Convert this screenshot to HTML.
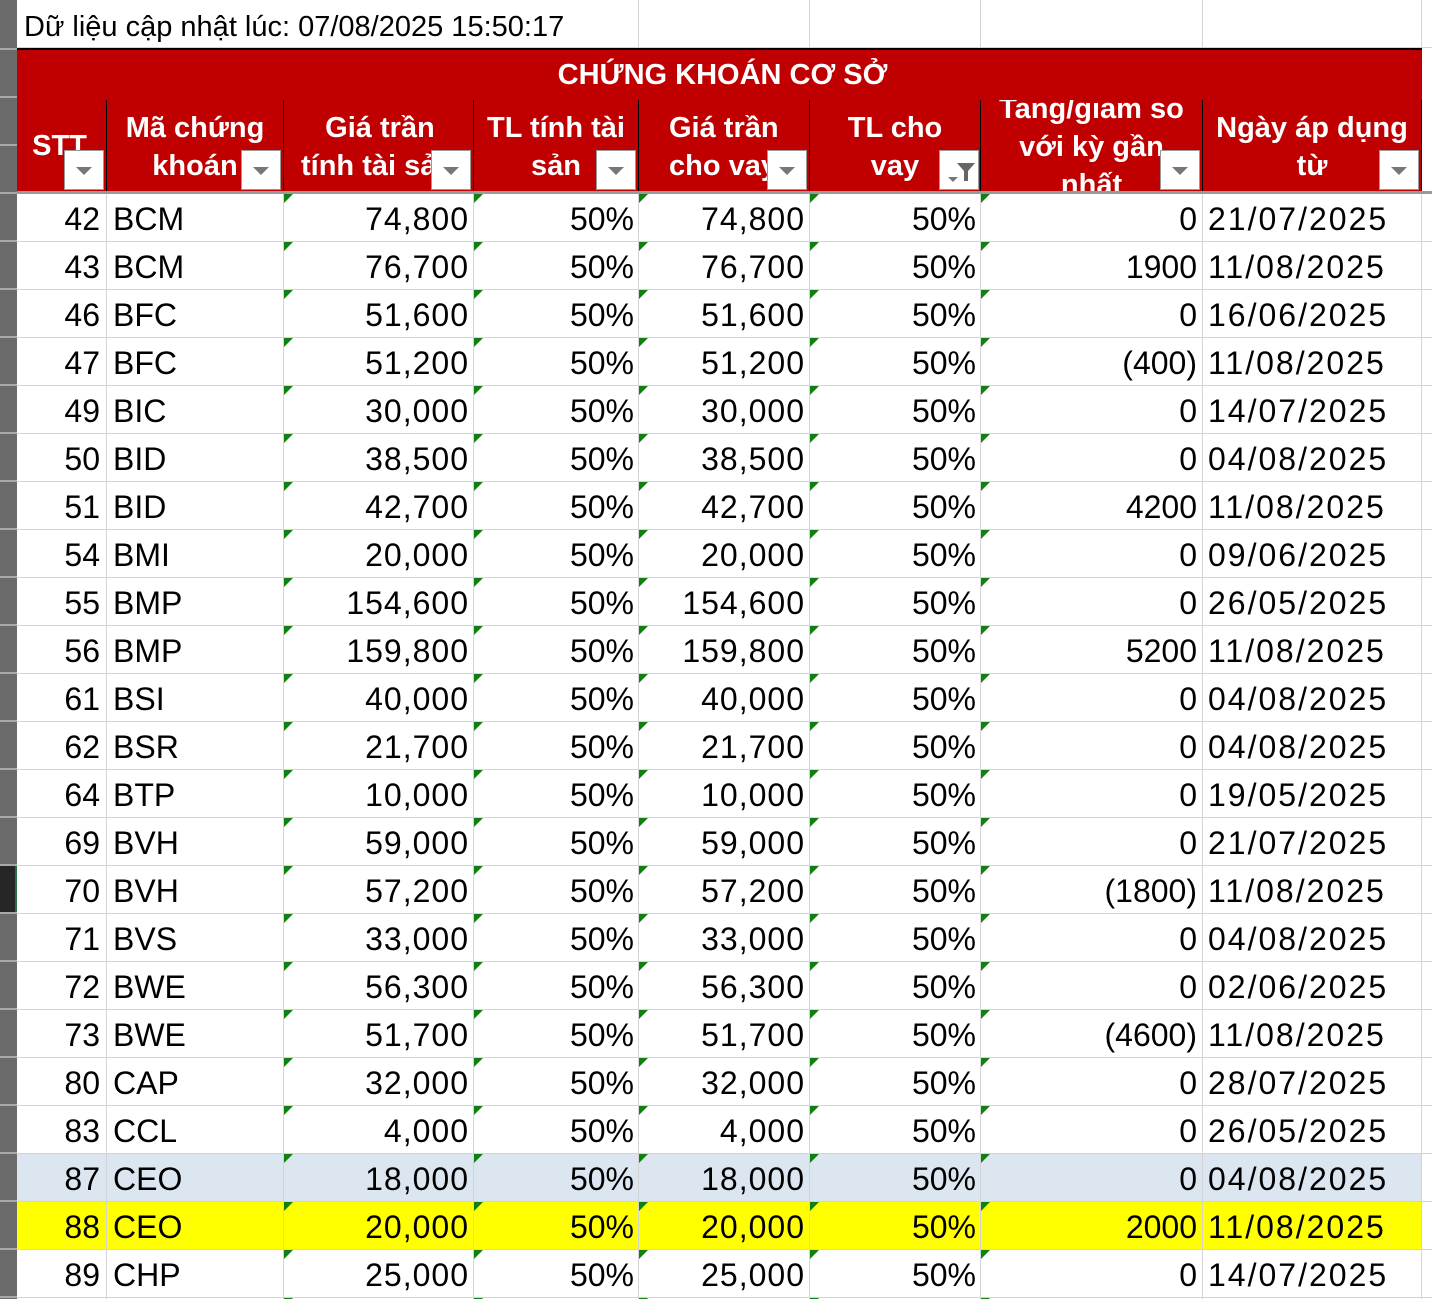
<!DOCTYPE html>
<html><head><meta charset="utf-8"><style>
*{margin:0;padding:0;box-sizing:border-box}
html,body{width:1432px;height:1299px;overflow:hidden}
body{background:#fff;position:relative;font-family:"Liberation Sans",Arial,sans-serif}
.gut{position:absolute;left:0;top:0;width:17px;height:1299px;background:#6b6b6b}
.vl{position:absolute;top:0;width:1px;height:1105px;background:#d4d4d4}
.r{position:absolute;left:17px;width:1415px;height:48px;border-bottom:1px solid #d4d4d4;font-size:32px;line-height:50px;color:#000}
.r span{position:absolute;top:0;white-space:nowrap}
.a{right:1332px}.b{left:96px}.c{right:963px;letter-spacing:1px}.d{right:798px}.e{right:627px;letter-spacing:1px}.f{right:456px}.g{right:235px}.h{left:1191px;letter-spacing:2px}
.hd{position:absolute;top:100px;height:92px;background:#c00000;color:#fff;font-weight:bold;font-size:28px;line-height:38px;text-align:center;border-left:1px solid #000;overflow:hidden}
.fb{position:absolute;width:40px;height:40px;background:#fff;border:1px solid #999;top:150px}
.fb:after{content:"";position:absolute;left:11px;top:16px;border-left:8px solid transparent;border-right:8px solid transparent;border-top:8px solid #777}
</style></head><body>
<div class="gut" style="background:repeating-linear-gradient(to bottom,#6b6b6b 0,#6b6b6b 46px,#a8a8a8 46px,#a8a8a8 48px);background-position:0 2px"></div>
<div style="position:absolute;left:17px;top:0;height:48px;width:1415px;font-size:29px;line-height:54px;padding-left:7px;border-bottom:1px solid #d4d4d4">Dữ liệu cập nhật lúc: 07/08/2025 15:50:17</div>
<div class="vl" style="left:638px;height:48px"></div><div class="vl" style="left:809px;height:48px"></div><div class="vl" style="left:980px;height:48px"></div><div class="vl" style="left:1202px;height:48px"></div><div class="vl" style="left:1421px;height:48px"></div>
<div style="position:absolute;left:17px;top:48px;width:1405px;height:52px;background:#c00000;border-top:2px solid #000;color:#fff;font-weight:bold;font-size:29px;line-height:50px;text-align:center;padding-left:6px">CHỨNG KHOÁN CƠ SỞ</div>
<div style="position:absolute;left:17px;top:100px;width:1405px;height:1px;background:#000"></div>
<div class="hd" style="left:17px;width:89px;line-height:92px;border-left:none;padding-right:4px;font-size:29px">STT</div>
<div class="hd" style="left:106px;width:177px;padding-top:9px;font-size:29px">Mã chứng<br>khoán</div>
<div class="hd" style="left:283px;width:190px;padding-top:9px;text-align:left;padding-left:17px;font-size:29px">&nbsp;&nbsp;&nbsp;Giá trần<br>tính tài sản</div>
<div class="hd" style="left:473px;width:165px;padding-top:9px;font-size:29px">TL tính tài<br>sản</div>
<div class="hd" style="left:638px;width:171px;padding-top:9px;text-align:left;padding-left:30px;font-size:29px">Giá trần<br>cho vay</div>
<div class="hd" style="left:809px;width:171px;padding-top:9px;font-size:29px">TL cho<br>vay</div>
<div class="hd" style="left:980px;width:222px;font-size:29px"><div style="margin-top:-10px">Tang/giam so<br>với kỳ gần<br>nhất</div></div>
<div class="hd" style="left:1202px;width:220px;padding-top:9px;border-right:1px solid #000;font-size:29px">Ngày áp dụng<br>từ</div>
<div class="fb" style="left:64px"></div><div class="fb" style="left:241px"></div><div class="fb" style="left:431px"></div><div class="fb" style="left:596px"></div><div class="fb" style="left:767px"></div>
<div style="position:absolute;left:939px;top:150px;width:40px;height:40px;background:#fff;border:1px solid #999">
<svg width="40" height="40"><path d="M17 12h18l-7 8v10h-4V20z" fill="#666"/><path d="M8 26h10l-5 5z" fill="#777"/></svg></div>
<div class="fb" style="left:1160px"></div><div class="fb" style="left:1379px"></div>
<div style="position:absolute;left:17px;top:191px;width:1415px;height:3px;background:#9a9a9a"></div>

<div style="position:absolute;left:17px;top:1154px;width:1405px;height:48px;background:#dce6f1"></div>
<div style="position:absolute;left:17px;top:1202px;width:1405px;height:48px;background:#ffff00"></div>

<div style="position:absolute;left:0;top:194px;width:1432px;height:1105px">
<div class="vl" style="left:106px"></div><div class="vl" style="left:283px"></div><div class="vl" style="left:473px"></div><div class="vl" style="left:638px"></div><div class="vl" style="left:809px"></div><div class="vl" style="left:980px"></div><div class="vl" style="left:1202px"></div><div class="vl" style="left:1421px"></div>
</div>

<div style="position:absolute;left:0;top:194px;width:1432px">
<div class="r" style="top:0"><span class="a">42</span><span class="b">BCM</span><span class="c">74,800</span><span class="d">50%</span><span class="e">74,800</span><span class="f">50%</span><span class="g">0</span><span class="h">21/07/2025</span></div>
<div class="r" style="top:48px"><span class="a">43</span><span class="b">BCM</span><span class="c">76,700</span><span class="d">50%</span><span class="e">76,700</span><span class="f">50%</span><span class="g">1900</span><span class="h">11/08/2025</span></div>
<div class="r" style="top:96px"><span class="a">46</span><span class="b">BFC</span><span class="c">51,600</span><span class="d">50%</span><span class="e">51,600</span><span class="f">50%</span><span class="g">0</span><span class="h">16/06/2025</span></div>
<div class="r" style="top:144px"><span class="a">47</span><span class="b">BFC</span><span class="c">51,200</span><span class="d">50%</span><span class="e">51,200</span><span class="f">50%</span><span class="g">(400)</span><span class="h">11/08/2025</span></div>
<div class="r" style="top:192px"><span class="a">49</span><span class="b">BIC</span><span class="c">30,000</span><span class="d">50%</span><span class="e">30,000</span><span class="f">50%</span><span class="g">0</span><span class="h">14/07/2025</span></div>
<div class="r" style="top:240px"><span class="a">50</span><span class="b">BID</span><span class="c">38,500</span><span class="d">50%</span><span class="e">38,500</span><span class="f">50%</span><span class="g">0</span><span class="h">04/08/2025</span></div>
<div class="r" style="top:288px"><span class="a">51</span><span class="b">BID</span><span class="c">42,700</span><span class="d">50%</span><span class="e">42,700</span><span class="f">50%</span><span class="g">4200</span><span class="h">11/08/2025</span></div>
<div class="r" style="top:336px"><span class="a">54</span><span class="b">BMI</span><span class="c">20,000</span><span class="d">50%</span><span class="e">20,000</span><span class="f">50%</span><span class="g">0</span><span class="h">09/06/2025</span></div>
<div class="r" style="top:384px"><span class="a">55</span><span class="b">BMP</span><span class="c">154,600</span><span class="d">50%</span><span class="e">154,600</span><span class="f">50%</span><span class="g">0</span><span class="h">26/05/2025</span></div>
<div class="r" style="top:432px"><span class="a">56</span><span class="b">BMP</span><span class="c">159,800</span><span class="d">50%</span><span class="e">159,800</span><span class="f">50%</span><span class="g">5200</span><span class="h">11/08/2025</span></div>
<div class="r" style="top:480px"><span class="a">61</span><span class="b">BSI</span><span class="c">40,000</span><span class="d">50%</span><span class="e">40,000</span><span class="f">50%</span><span class="g">0</span><span class="h">04/08/2025</span></div>
<div class="r" style="top:528px"><span class="a">62</span><span class="b">BSR</span><span class="c">21,700</span><span class="d">50%</span><span class="e">21,700</span><span class="f">50%</span><span class="g">0</span><span class="h">04/08/2025</span></div>
<div class="r" style="top:576px"><span class="a">64</span><span class="b">BTP</span><span class="c">10,000</span><span class="d">50%</span><span class="e">10,000</span><span class="f">50%</span><span class="g">0</span><span class="h">19/05/2025</span></div>
<div class="r" style="top:624px"><span class="a">69</span><span class="b">BVH</span><span class="c">59,000</span><span class="d">50%</span><span class="e">59,000</span><span class="f">50%</span><span class="g">0</span><span class="h">21/07/2025</span></div>
<div class="r" style="top:672px"><span class="a">70</span><span class="b">BVH</span><span class="c">57,200</span><span class="d">50%</span><span class="e">57,200</span><span class="f">50%</span><span class="g">(1800)</span><span class="h">11/08/2025</span></div>
<div class="r" style="top:720px"><span class="a">71</span><span class="b">BVS</span><span class="c">33,000</span><span class="d">50%</span><span class="e">33,000</span><span class="f">50%</span><span class="g">0</span><span class="h">04/08/2025</span></div>
<div class="r" style="top:768px"><span class="a">72</span><span class="b">BWE</span><span class="c">56,300</span><span class="d">50%</span><span class="e">56,300</span><span class="f">50%</span><span class="g">0</span><span class="h">02/06/2025</span></div>
<div class="r" style="top:816px"><span class="a">73</span><span class="b">BWE</span><span class="c">51,700</span><span class="d">50%</span><span class="e">51,700</span><span class="f">50%</span><span class="g">(4600)</span><span class="h">11/08/2025</span></div>
<div class="r" style="top:864px"><span class="a">80</span><span class="b">CAP</span><span class="c">32,000</span><span class="d">50%</span><span class="e">32,000</span><span class="f">50%</span><span class="g">0</span><span class="h">28/07/2025</span></div>
<div class="r" style="top:912px"><span class="a">83</span><span class="b">CCL</span><span class="c">4,000</span><span class="d">50%</span><span class="e">4,000</span><span class="f">50%</span><span class="g">0</span><span class="h">26/05/2025</span></div>
<div class="r" style="top:960px"><span class="a">87</span><span class="b">CEO</span><span class="c">18,000</span><span class="d">50%</span><span class="e">18,000</span><span class="f">50%</span><span class="g">0</span><span class="h">04/08/2025</span></div>
<div class="r" style="top:1008px"><span class="a">88</span><span class="b">CEO</span><span class="c">20,000</span><span class="d">50%</span><span class="e">20,000</span><span class="f">50%</span><span class="g">2000</span><span class="h">11/08/2025</span></div>
<div class="r" style="top:1056px"><span class="a">89</span><span class="b">CHP</span><span class="c">25,000</span><span class="d">50%</span><span class="e">25,000</span><span class="f">50%</span><span class="g">0</span><span class="h">14/07/2025</span></div>
</div>

<svg style="position:absolute;left:0;top:194px" width="1432" height="1105">
<defs><pattern id="p" x="0" y="0" width="1432" height="48" patternUnits="userSpaceOnUse">
<polygon points="284,0 293,0 284,9" fill="#108010"/>
<polygon points="474,0 483,0 474,9" fill="#108010"/>
<polygon points="639,0 648,0 639,9" fill="#108010"/>
<polygon points="810,0 819,0 810,9" fill="#108010"/>
<polygon points="981,0 990,0 981,9" fill="#108010"/>
</pattern></defs>
<rect width="1432" height="1105" fill="url(#p)"/>
</svg>
<div style="position:absolute;left:0;top:866px;width:17px;height:46px;background:#262626;border-right:2px solid #217346"></div>
</body></html>
